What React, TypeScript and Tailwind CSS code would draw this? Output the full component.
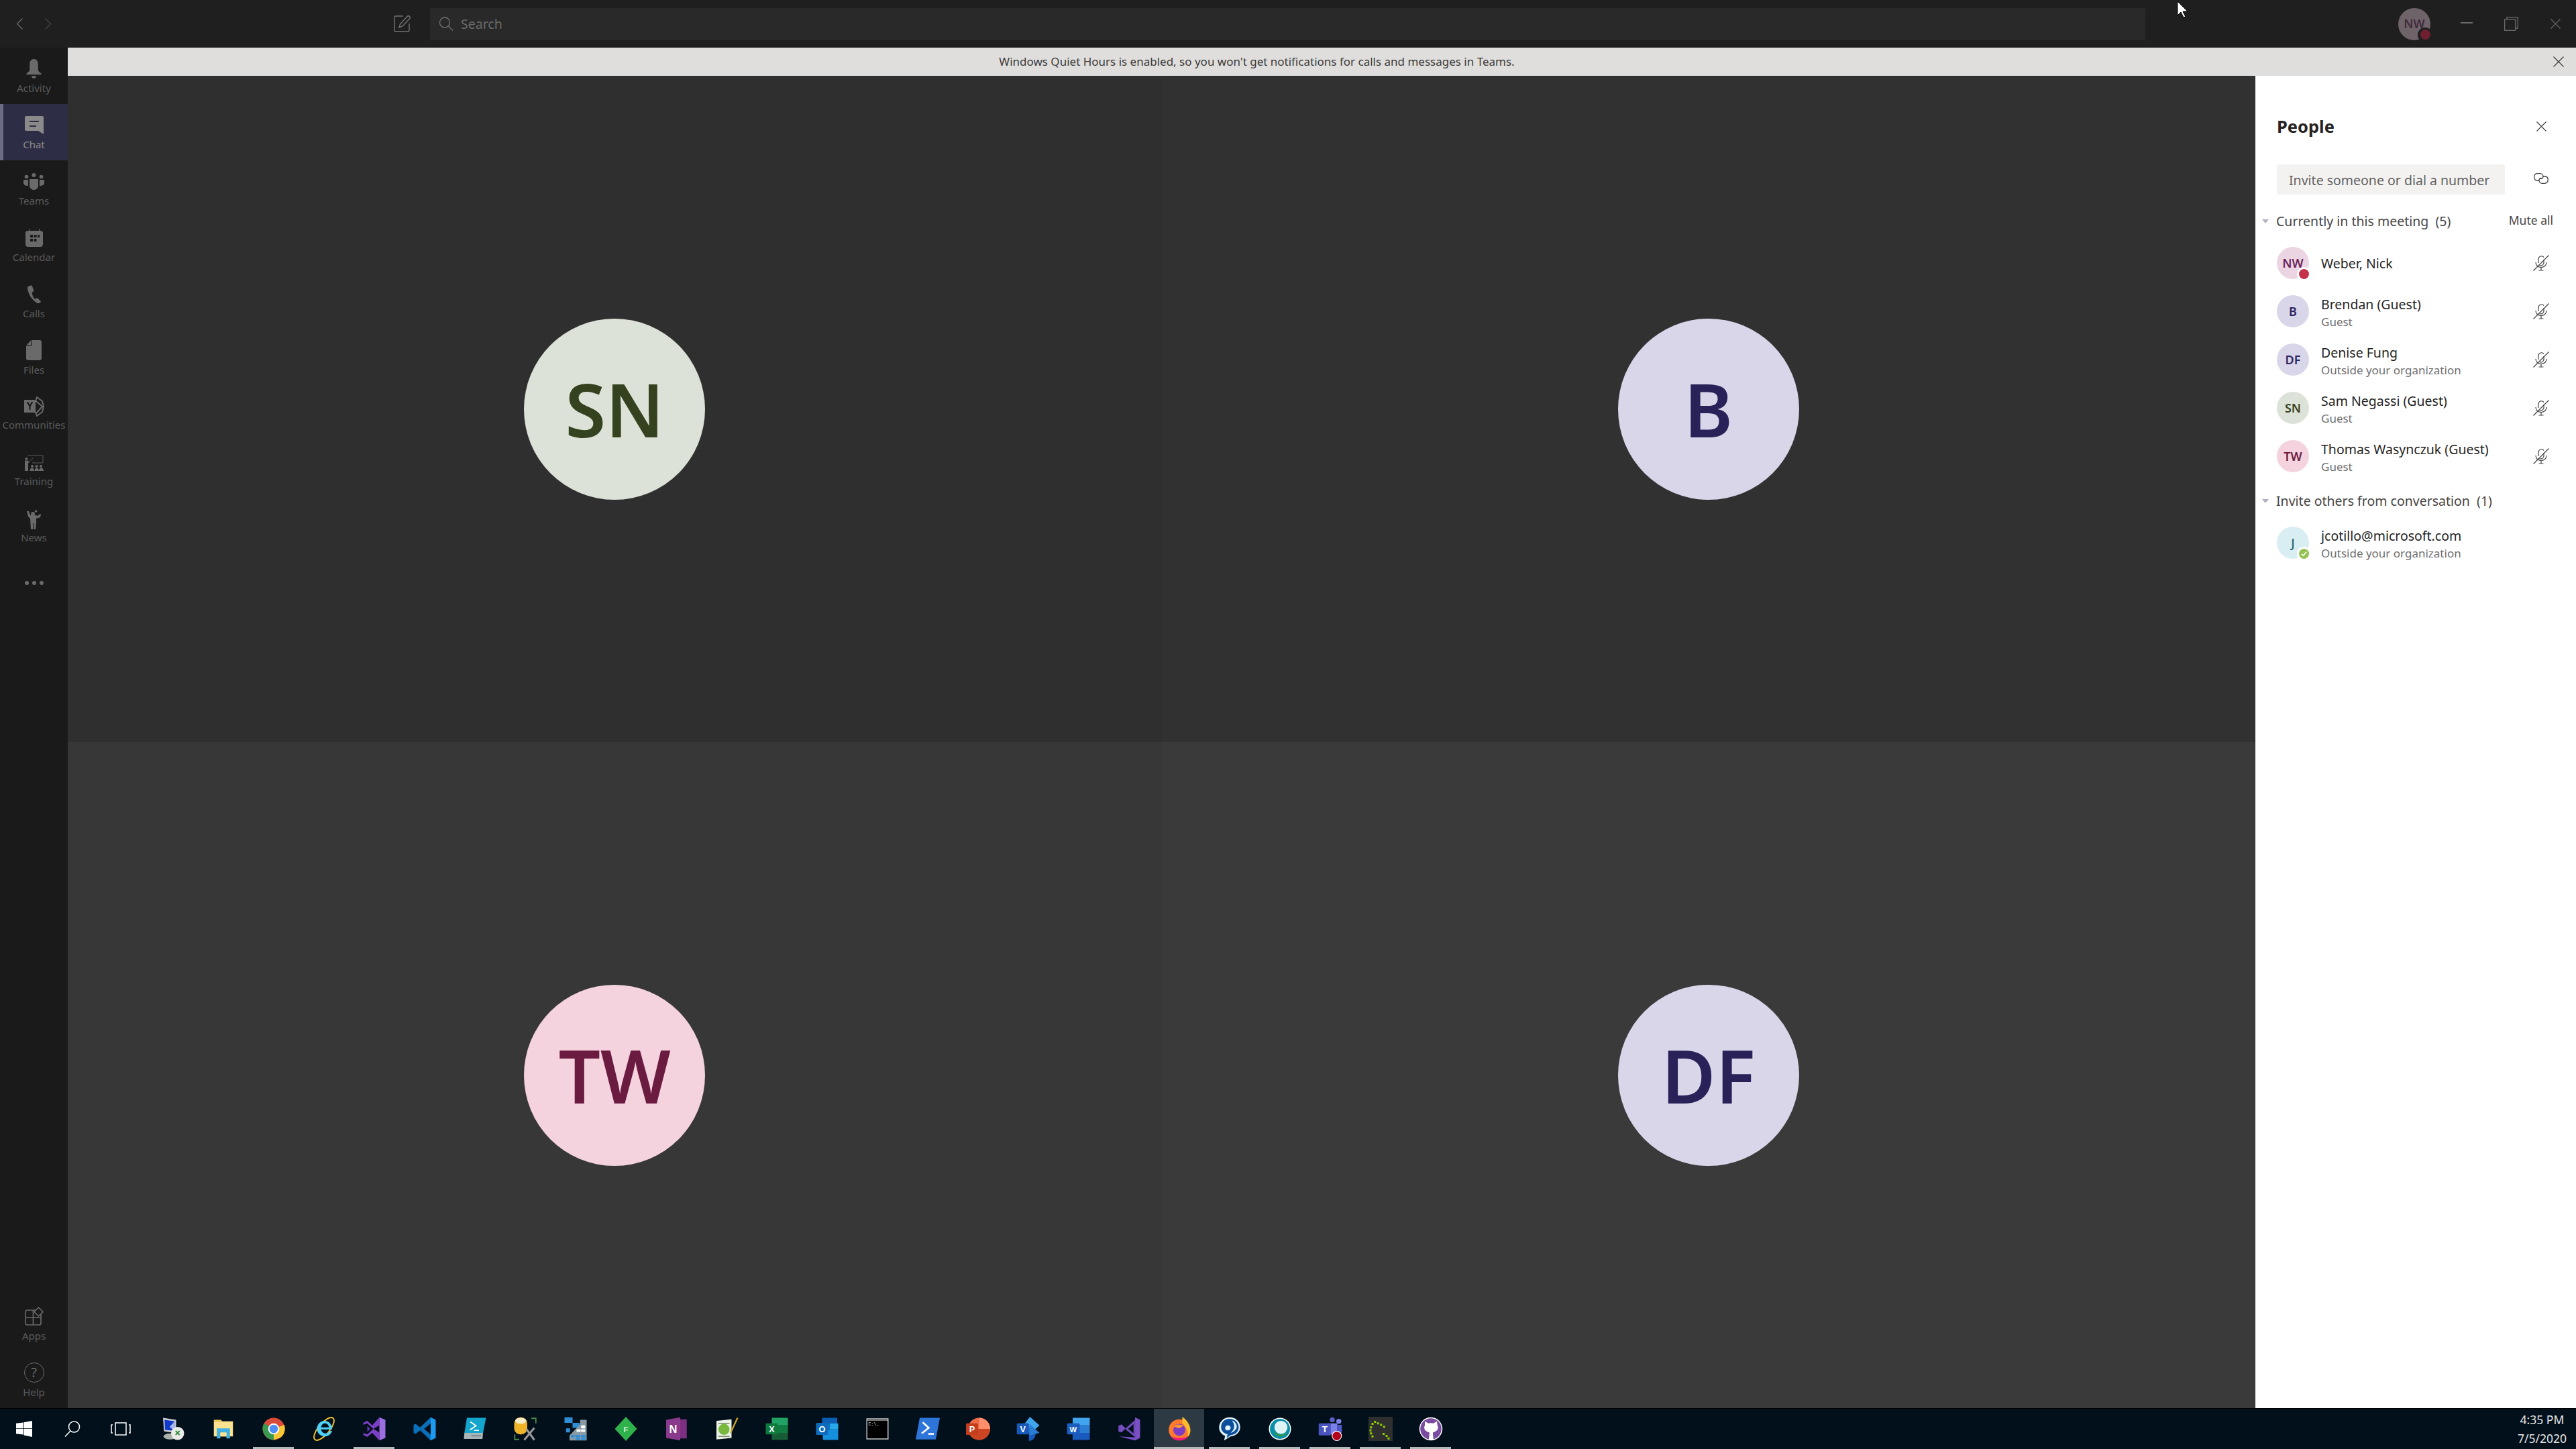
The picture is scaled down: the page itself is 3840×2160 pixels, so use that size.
import React from "react";

const Ico = ({ w = 28, h = 28, vb, children }: { w?: number; h?: number; vb: string; children: React.ReactNode }) => (
  <svg width={w} height={h} viewBox={vb} fill="none" className="shrink-0" preserveAspectRatio="none">{children}</svg>
);

const C = "currentColor";
const navIcons: Record<string, React.ReactNode> = {
  Activity: <Ico w={27} h={29} vb="0 0 30 30"><path fill={C} d="M15 0c-5 0-7 4-7 9v8c0 2-3 3.500-5 5-.8.800-.4 2 1 2h22c1.400 0 1.800-1.200 1-2-2-1.500-5-3-5-5V9c0-5-2-9-7-9z" /><path fill={C} d="M11 26h8c0 2-2 4-4 4s-4-2-4-4z" /></Ico>,
  Chat: <Ico w={28} h={27} vb="0 0 28 27"><path fill={C} fillRule="evenodd" d="M2 0h24c1.200 0 2 .800 2 2v25l-8-5H2c-1 0-2-.800-2-2V2C0 .800 1 0 2 0zm5 7v2h14V7zm0 7v2h10v-2z" /></Ico>,
  Teams: <Ico w={31} h={25} vb="0 0 31 25"><circle cx="15.500" cy="3" r="3" fill={C} /><circle cx="4.500" cy="5.500" r="2.800" fill={C} /><circle cx="26.500" cy="5.500" r="2.800" fill={C} /><path fill={C} d="M9 9h13v10c0 3.500-3 6-6.500 6S9 22.500 9 19z" /><path fill={C} d="M0 10h7v9c-4 0-7-1.500-7-4zM24 10h7v5c0 2.500-3 4-7 4z" /></Ico>,
  Calendar: <Ico w={26} h={27} vb="0 0 26 27"><path fill={C} fillRule="evenodd" d="M5 0h1v3h14V0h1v3h1c2.500 0 4 1 4 3v17c0 2.500-1.500 4-4 4H4c-2.500 0-4-1.500-4-4V6c0-2 1.500-3 4-3h1zm2 9v4h4V9zm5.500 0v4h4V9zM18 9v4h3V9zM7 15v4h4v-4zm5.500 0v4h4v-4z" /></Ico>,
  Calls: <Ico w={20} h={27} vb="0 0 20 27"><path fill={C} d="M1 2 5 .5c1-.3 1.600 0 2 1l2.200 6c.3 1 0 1.500-.6 2L6.500 11c.5 3.500 2 7 4 9.500l3-1c1-.3 1.500-.1 2.200.5l3.600 3.700c.8.800.6 1.500 0 2.200L17 27c-1 .5-2 .3-3-.3C6 21.500 1 13 0 5c0-1.500 0-2.500 1-3z" /></Ico>,
  Files: <Ico w={23} h={30} vb="0 0 23 30"><path fill={C} d="M8 0h12c2 0 3 1 3 3v24c0 2-1 3-3 3H3c-2 0-3-1-3-3V9h8z" /><path fill={C} d="M7 0.500V8H0z" /></Ico>,
  Communities: <Ico w={30} h={30} vb="0 0 30 30"><path fill={C} d="M1 5h16v19H1c-.500 0-1-.500-1-1V6c0-.500.500-1 1-1z" /><path stroke={C} strokeWidth="2" d="M17 7 19 1l8 6 2 8-2 8-8 6-2-5h2l8-9-8-7z" /><path fill="#1a1a1a" d="M3.500 8H6l2.500 4.500L11 8h2.500L9.500 15v5h-2v-5z" /></Ico>,
  Training: <Ico w={28} h={24} vb="0 0 28 24"><path stroke={C} strokeWidth=".8" d="M4 1h23v11H11" /><path stroke={C} strokeWidth=".8" d="M5 11 12 5" /><circle cx="2.500" cy="6" r="2" fill={C} /><path fill={C} d="M0 8.500h4.500l2 2.500-1.500 1.500V24H0z" /><circle cx="11" cy="17" r="2" fill={C} /><circle cx="17.500" cy="17" r="2" fill={C} /><circle cx="24" cy="17" r="2" fill={C} /><path fill={C} d="M7.500 24c0-6 6.500-6 6.500 0zM14.500 24c0-6 6.500-6 6.500 0zM21 24c0-6 7-6 7 0z" /></Ico>,
  News: <Ico w={21} h={30} vb="0 0 21 30"><circle cx="9" cy="7" r="3" fill={C} /><path fill={C} d="M0 3 3 3 5 9h8l3 1 4-3 1 1-1 4-6 2v6l-1 10h-3v-9H9v9H6l-1-16-3-3z" /><circle cx="13.500" cy="3" r="1.800" fill={C} /></Ico>,
  Apps: <Ico w={28} h={28} vb="0 0 28 28"><g stroke={C} strokeWidth="1.700"><rect x="1" y="5" width="23" height="22" rx="2.500" /><path d="M1 16h23M12.500 5v22" /><path fill="#1a1a1a" d="M20.500 1l6.500 6.500-6.500 6.500-6.500-6.500z" strokeLinejoin="round" /></g></Ico>,
};

const topItems: { n: string; active?: boolean; close?: boolean }[] = [
  { n: "Activity" }, { n: "Chat", active: true }, { n: "Teams" }, { n: "Calendar" }, { n: "Calls" },
  { n: "Files" }, { n: "Communities", close: true }, { n: "Training", close: true }, { n: "News", close: true },
];

function NavItem({ n, active, close }: { n: string; active?: boolean; close?: boolean }) {
  return (
    <div className={`h-[84px] flex flex-col items-center justify-start pt-[16px] relative ${active ? "bg-[#2d2d45] text-[#8a8a8a]" : "text-[#6a6a6a]"}`}>
      {active && <div className="absolute left-0 top-0 bottom-0 w-[5px] bg-[#6c6c84]" />}
      <div className="h-[30px] flex items-center justify-center">{navIcons[n]}</div>
      <div className={`${close ? "mt-[2px]" : "mt-[4px]"} text-[15px] leading-[20px] ${active ? "text-[#8c8c8c]" : "text-[#5a5a5a]"}`}>{n}</div>
    </div>
  );
}

const XIcon = ({ s, c, w = 1.5 }: { s: number; c: string; w?: number }) => (
  <svg width={s} height={s} viewBox="0 0 16 16" fill="none"><path d="M.5.5l15 15M15.500.5l-15 15" stroke={c} strokeWidth={w} /></svg>
);

const MicOff = () => (
  <svg width="24" height="24" viewBox="0 0 24 24" fill="none" stroke="#424242" strokeWidth="1.200">
    <path d="M8 12V6a4.500 4.500 0 0 1 8-2.500M16 7v5a4.500 4.500 0 0 1-6.500 3.500" />
    <path d="M4 11c0 4 3 7.500 8 7.500s8-3.500 8-7.500M12 18.500V23M8.500 23h7M.5 23.500 23.500.5" />
  </svg>
);

function Avatar({ t, bg, fg, status }: { t: string; bg: string; fg: string; status?: "busy" | "ok" }) {
  return (
    <div className={`relative w-[48px] h-[48px] rounded-full flex items-center justify-center shrink-0 text-[18px] font-semibold ${bg} ${fg}`}>
      {t}
      {status && (
        <div className="absolute right-[-3px] bottom-[-3px] w-[21px] h-[21px] rounded-full bg-white flex items-center justify-center">
          <div className={`w-[15px] h-[15px] rounded-full flex items-center justify-center ${status === "busy" ? "bg-[#c4314b]" : "bg-[#92c353]"}`}>
            {status === "ok" && <svg width="9" height="9" viewBox="0 0 10 10" fill="none"><path d="M1 5.500 4 8l5-6" stroke="#fff" strokeWidth="1.800" /></svg>}
          </div>
        </div>
      )}
    </div>
  );
}

function Row({ a, name, sub, mic = true }: { a: React.ReactNode; name: string; sub?: string; mic?: boolean }) {
  return (
    <div className="h-[72px] flex items-center pl-[31px] pr-[40px]">
      {a}
      <div className={`ml-[18px] flex-1 min-w-0 ${sub ? "pt-[5px]" : "pt-[2px]"}`}>
        <div className="text-[19.500px] leading-[26px] text-[#252423] whitespace-nowrap">{name}</div>
        {sub && <div className="text-[17px] leading-[26px] text-[#6f6f6f] whitespace-nowrap">{sub}</div>}
      </div>
      {mic && <MicOff />}
    </div>
  );
}

const Caret = () => <div className="w-0 h-0 border-l-[5.500px] border-r-[5.500px] border-t-[6px] border-l-transparent border-r-transparent border-t-[#b3b0c4]" />;

function SectionHead({ t, right, className = "" }: { t: string; right?: string; className?: string }) {
  return (
    <div className={`h-[40px] flex items-center pl-[9px] pr-[34px] ${className}`}>
      <Caret />
      <div className="ml-[11px] flex-1 text-[19.500px] text-[#484644] whitespace-pre">{t}</div>
      {right && <div className="text-[17.500px] text-[#484644] -mt-[4px]">{right}</div>}
    </div>
  );
}

function Tile({ t, bg, circle, fg }: { t: string; bg: string; circle: string; fg: string }) {
  return (
    <div className={`flex items-center justify-center ${bg}`}>
      <div className={`w-[270px] h-[270px] rounded-full flex items-center justify-center text-[110px] font-semibold ${circle} ${fg}`}>{t}</div>
    </div>
  );
}

const L = ({ x, y, c, t, s = 16 }: { x: number; y: number; c: string; t: string; s?: number }) => (
  <text x={x} y={y} fill={c} fontSize={s} fontWeight="700" textAnchor="middle" fontFamily="Liberation Sans, sans-serif">{t}</text>
);

const tb: { w?: React.ReactNode; u?: boolean; hl?: boolean; key: string }[] = [
  { key: "rdp", w: <g><path fill="#c9ccd3" d="M4 2 30 6v26L6 29z" /><path fill="#1339c9" d="M7 6l20 3v19L8 26z" /><path fill="#a7b8f0" d="M27 9v19l-10-8z" /><ellipse cx="18" cy="39" rx="13" ry="6" fill="#aab0aa" /><circle cx="33" cy="33" r="13" fill="#e9ece7" /><path d="M29 28l4 4-4 4M37 28l-4 4 4 4" stroke="#2f8a3e" strokeWidth="2.500" fill="none" /></g> },
  { key: "explorer", w: <g><path fill="#f1c84c" d="M5 6h14l3 3h-17z" /><path fill="#ffe28f" d="M5 9h38v30H5z" /><path fill="#3fb1e5" d="M11 23h26v20h-7V31H18v12h-7z" /><path fill="#ffe28f" d="M18 32h12v7H18z" /></g> },
  { key: "chrome", u: true, w: <g><circle cx="24" cy="24" r="22" fill="#d94a3a" /><path fill="#f7c833" d="M24 24 45 16c3 9 1 20-9 26l-12 4z" /><path fill="#399a4d" d="M24 24 24 46C12 46 2 35 2 24c0-4 1-8 3-11z" /><circle cx="24" cy="24" r="11" fill="#fff" /><circle cx="24" cy="24" r="8.500" fill="#4e8df1" /></g> },
  { key: "ie", w: <g><ellipse cx="24" cy="24" rx="28" ry="11" fill="none" stroke="#f4c22e" strokeWidth="2.500" transform="rotate(-50 24 24)" /><path fill="#4fd0f5" d="M25 8c9 0 15 7 15 17H18c1 5 5 8 9 8s7-2 9-5h4c-2 7-8 11-14 11-9 0-16-7-16-15S16 8 25 8zm-7 13h16c-1-5-4-8-8-8s-7 3-8 8z" /></g> },
  { key: "vs", u: true, w: <g><path fill="#9c6fe0" d="M34 1l12 5v36l-12 5z" /><path fill="#7a3fc4" d="M34 1v16l-12 7L10 13l-8 3v16l8 3 12-11 12 7v16L20 32l-10 8-8-4V12l8-4 10 9z" /><path fill="#6530a8" d="M10 18v12l6-6z" /></g> },
  { key: "vscode", w: <g><path fill="#0a6fb8" d="M36 1 15 21 6 14l-4 2v16l4 2 9-7 21 20z" /><path fill="#1d9bf0" d="M36 1l10 5v36l-10 5z" /><path fill="#000d18" d="M36 13v22L23 24z" /></g> },
  { key: "psa", w: <g><path fill="#14a5cc" d="M8 2h38l-6 30H3z" /><path fill="#a9b6b9" d="M3 32h37l-1 12H2z" /><path d="M15 10l11 8-12 8" stroke="#fff" strokeWidth="2.500" fill="none" /><path d="M22 27h10" stroke="#fff" strokeWidth="2" /><path d="M17 38h19" stroke="#4b5b60" strokeWidth="1.500" /></g> },
  { key: "db", w: <g><rect x="2" y="1" width="26" height="34" rx="12" fill="#f0b429" /><ellipse cx="15" cy="8" rx="11" ry="6" fill="#f6ecc8" /><path d="M36 3h9v10M3 35v10h9" stroke="#4a8a4a" strokeWidth="2.500" fill="none" /><path d="M22 46 42 22M42 46 26 24" stroke="#9a9a9a" strokeWidth="4" /></g> },
  { key: "sql", w: <g fill="#2f8dd6"><rect x="2" y="1" width="16" height="11" /><rect x="18" y="12" width="14" height="10" /><rect x="5" y="23" width="8" height="8" /><path fill="#8a9aa5" d="M12 47V37l21-22V6h13v41z" /><path fill="#fff" d="M35 17h8v6h-8zM26 25h8v5h-8zM35 25h8v5h-8z" /><rect x="15" y="36" width="7" height="5" /><rect x="24" y="36" width="9" height="5" /><rect x="35" y="36" width="9" height="5" /><rect x="24" y="42" width="9" height="4" /><rect x="35" y="42" width="9" height="4" /></g> },
  { key: "f", w: <g><path fill="#2fb14b" d="M24 0 46 24 24 48 2 24z" /><L x={24} y={30} c="#d8f5dd" t="F" s={15} /></g> },
  { key: "onenote", w: <g><path fill="#8a3a8c" d="M4 6 32 1v46L4 42z" /><path fill="#7d2f80" d="M32 5h13v38H32z" /><L x={18} y={32} c="#fff" t="N" s={22} /></g> },
  { key: "npp", w: <g><path fill="#e9f2e4" d="M4 8 34 5v37L4 45z" /><circle cx="19" cy="25" r="11" fill="#78b83c" /><path d="M8 13h22M8 39h22" stroke="#7a8a70" strokeWidth="2" /><path d="M32 32 46 2" stroke="#d4a72c" strokeWidth="3" /></g> },
  { key: "excel", w: <g><path fill="#21a366" d="M14 2h32v15H14z" /><path fill="#107c41" d="M14 17h32v15H14z" /><path fill="#185c37" d="M14 32h32v14H14z" /><rect x="2" y="13" width="24" height="22" rx="2" fill="#0f7a3d" /><L x={14} y={30} c="#fff" t="X" s={17} /></g> },
  { key: "outlook", w: <g><path fill="#0a5fb4" d="M14 2h30v11H14z" /><path fill="#28a8ea" d="M29 13h17v12H29z" /><path fill="#0f78d4" d="M14 13h15v12H14z" /><path fill="#1490df" d="M14 25 46 25v21H16z" /><rect x="2" y="12" width="24" height="24" rx="2" fill="#0f6cbd" /><L x={14} y={30} c="#fff" t="O" s={17} /></g> },
  { key: "cmd", w: <g><rect x="2" y="3" width="44" height="42" fill="#c8c8c8" /><rect x="4" y="8" width="40" height="35" fill="#000" /><rect x="4" y="4" width="40" height="4" fill="#767676" /><text x="6" y="17" fill="#ddd" fontSize="9" fontFamily="Liberation Mono, monospace">C:\_</text></g> },
  { key: "ps", w: <g><path fill="#2e75d9" d="M8 2h40l-8 43H0z" /><path d="M14 11l12 11-14 11" stroke="#fff" strokeWidth="3.500" fill="none" /><path d="M25 34h11" stroke="#fff" strokeWidth="3.500" /></g> },
  { key: "ppt", w: <g><circle cx="26" cy="24" r="22" fill="#ed6c47" /><path fill="#ff8f6b" d="M26 2a22 22 0 0 1 22 22H26z" /><path fill="#c43e1c" d="M4 24h44c0 12-10 22-22 22S4 36 4 24z" opacity=".85" /><rect x="0" y="13" width="24" height="23" rx="2" fill="#c43e1c" /><L x={12} y={31} c="#fff" t="P" s={17} /></g> },
  { key: "visio", w: <g><path fill="#41a5ee" d="M27 0l19 17-19 17-13-17z" /><path fill="#185abd" d="M25 22a13 13 0 1 1 0 26z" /><path fill="#2b7cd3" d="M26 14 46 32 26 37z" /><rect x="1" y="13" width="24" height="22" rx="2" fill="#1859b8" /><L x={13} y={30} c="#fff" t="V" s={17} /></g> },
  { key: "word", w: <g><path fill="#41a5ee" d="M12 2h34v15H12z" /><path fill="#2b7cd3" d="M12 17h34v15H12z" /><path fill="#185abd" d="M12 32h34v14H12z" /><rect x="1" y="13" width="25" height="22" rx="2" fill="#1a5fc0" /><L x={13} y={30} c="#fff" t="W" s={15} /></g> },
  { key: "vs2", w: <g><path fill="#7a4fc4" d="M36 1 46 6v36l-10 5-32-8 32 2zM9 15l8 8-8 8-6-2V18z" /><path stroke="#6f4ab8" strokeWidth="4" fill="none" d="M35 10 19 24l16 13zM6 17v13" /></g> },
  { key: "firefox", u: true, hl: true, w: <g><circle cx="24" cy="26" r="21" fill="#ff7a2a" /><path fill="#ffbd2e" d="M30 0c8 6 16 15 16 27 0 5-2 10-5 13 1-10-3-20-11-27z" /><path fill="#f0187f" d="M6 38c8 12 28 12 36 1-10 4-26 5-36-1z" /><circle cx="24" cy="26" r="12" fill="#7d3cc4" /><path fill="#ff9a2a" d="M14 20c4-6 12-6 18-2l-8 5z" /></g> },
  { key: "skype", u: true, w: <g><path fill="#dff1fb" d="M24 1C12 1 3 10 3 21c0 8 5 14 12 17l-2 9 13-8c11-1 19-9 19-18C45 9 36 1 24 1z" /><path fill="#0b4f9c" d="M24 4c10 0 18 7 18 17 0 8-7 15-15 15l-9 6 2-7c-8-2-13-8-13-14C7 11 14 4 24 4z" /><path fill="#dff1fb" d="M28 7c7 2 11 9 10 14s-7 10-12 11c5-5 7-8 7-13s-2-9-5-12zM20 17c4 0 6 2 6 5s-2 5-6 5-5-3-5-5 2-5 5-5z" /></g> },
  { key: "circle", u: true, w: <g><circle cx="24" cy="24" r="22" fill="#fff" /><circle cx="24" cy="24" r="20" fill="#0b8fa8" /><circle cx="26" cy="21" r="13" fill="#dff3f5" /><path fill="#3b9a3a" d="M10 26c4 10 20 14 28 4-4 12-24 13-28-4z" /></g> },
  { key: "teams", u: true, w: <g><circle cx="28" cy="6" r="5" fill="#5b5fc7" /><circle cx="41" cy="9" r="5" fill="#7b83eb" /><path fill="#7b83eb" d="M18 13h20v22H22z" /><path fill="#5059c9" d="M38 16h9v12c0 6-4 9-9 9z" /><rect x="1" y="13" width="24" height="24" rx="2" fill="#4b53bc" /><L x={13} y={31} c="#fff" t="T" s={18} /><circle cx="37" cy="38" r="10" fill="#fff" /><circle cx="37" cy="38" r="8.500" fill="#b3001b" /></g> },
  { key: "term", u: true, w: <g><rect x="0" y="0" width="48" height="48" fill="#2f2f2f" /><g fill="#8ed100"><rect x="6" y="12" width="4" height="4" /><rect x="11" y="8" width="4" height="4" /><rect x="17" y="11" width="4" height="4" /><rect x="23" y="14" width="4" height="4" /><rect x="29" y="18" width="4" height="4" /><rect x="3" y="19" width="4" height="4" /><rect x="2" y="25" width="4" height="4" /><rect x="3" y="31" width="4" height="4" /><rect x="6" y="37" width="4" height="4" /><rect x="28" y="32" width="4" height="4" /><rect x="34" y="36" width="4" height="4" /><rect x="38" y="41" width="4" height="4" /></g></g> },
  { key: "github", u: true, w: <g><circle cx="24" cy="24" r="23" fill="#ffffff" /><circle cx="24" cy="24" r="21" fill="#7a4ba0" /><path fill="#fff" d="M12 9l7 4c3-1 7-1 10 0l7-4 1 8c3 6 0 12-9 14v3c0 3 1 7 1 12H20c0-5 1-9 1-12v-3c-9-2-12-8-9-14z" /></g> },
];

export default function App() {
  return (
    <div className="w-[3840px] h-[2160px] flex flex-col relative overflow-hidden bg-[#1f1f1f] font-['Noto_Sans','Open_Sans',sans-serif]">
      <div className="h-[71px] shrink-0 flex items-center bg-[#1f1f1f]">
        <div className="w-[101px] flex items-center pl-[24px] gap-[33px] shrink-0">
          <svg width="10" height="17" viewBox="0 0 10 17" fill="none"><path d="M9.500.5 1.500 8.500l8 8" stroke="#6b6b6b" strokeWidth="1.300" /></svg>
          <svg width="10" height="17" viewBox="0 0 10 17" fill="none"><path d="M.5.5l8 8-8 8" stroke="#444" strokeWidth="1.300" /></svg>
        </div>
        <div className="ml-[486px] w-[26px] flex justify-center shrink-0">
          <svg width="26" height="25" viewBox="0 0 26 25" fill="none" stroke="#737373" strokeWidth="1.400">
            <path d="M14 1H3C1.500 1 1 2 1 3v19c0 1.500.500 2 2 2h18c1.500 0 2-.500 2-2V12" />
            <path d="M8 18l1.500-5L20 1.500c1-1 2.500-1 3.500 0s1 2.500 0 3.500L13 16z" />
          </svg>
        </div>
        <div className="ml-[28px] w-[2557px] h-[48px] rounded-[3px] bg-[#292929] flex items-center pl-[13px] shrink-0">
          <svg width="22" height="21" viewBox="0 0 22 21" fill="none" stroke="#737373" strokeWidth="1.300"><circle cx="9" cy="8.500" r="7.500" /><path d="M14.500 14l6.500 6.500" /></svg>
          <span className="ml-[11px] text-[19.500px] text-[#6a6a6a]">Search</span>
        </div>
        <div className="ml-[377px] relative w-[48px] h-[48px] rounded-full bg-[#6f636a] flex items-center justify-center text-[18px] font-semibold text-[#3f2a3a] shrink-0">
          NW
          <div className="absolute right-[-3px] bottom-[-3px] w-[22px] h-[22px] rounded-full bg-[#1f1f1f] flex items-center justify-center">
            <div className="w-[15px] h-[15px] rounded-full bg-[#6f2030]" />
          </div>
        </div>
        <div className="ml-[45px] w-[18px] h-[2px] -mt-[3px] bg-[#6b6b6b]" />
        <svg className="ml-[47px]" width="21" height="21" viewBox="0 0 21 21" fill="none" stroke="#6b6b6b" strokeWidth="1.300"><rect x=".7" y="4" width="16" height="16.300" /><path d="M4 4V.7h16.300V17H17" /></svg>
        <div className="ml-[48px]"><XIcon s={15} c="#6b6b6b" w={1.300} /></div>
      </div>

      <div className="flex-1 flex min-h-0">
        <div className="w-[101px] shrink-0 bg-[#1a1a1a] flex flex-col">
          {topItems.map((i) => <NavItem key={i.n} n={i.n} active={i.active} close={i.close} />)}
          <div className="h-[84px] flex items-start justify-center gap-[5px] pt-[39px]">
            <div className="w-[6px] h-[6px] rounded-full bg-[#6a6a6a]" />
            <div className="w-[6px] h-[6px] rounded-full bg-[#6a6a6a]" />
            <div className="w-[6px] h-[6px] rounded-full bg-[#6a6a6a]" />
          </div>
          <div className="mt-auto">
            <NavItem n="Apps" />
            <div className="h-[84px] flex flex-col items-center pt-[16px] text-[#6a6a6a]">
              <div className="w-[30px] h-[30px] rounded-full border-[1.500px] border-[#6a6a6a] flex items-center justify-center text-[20px] leading-none">?</div>
              <div className="mt-[4px] text-[15px] leading-[20px] text-[#5a5a5a]">Help</div>
            </div>
          </div>
        </div>

        <div className="flex-1 flex flex-col min-w-0">
          <div className="h-[42px] shrink-0 bg-[#dfdedc] flex items-center">
            <div className="flex-1 pr-[160px] text-center text-[17px] text-[#3b3a39]">Windows Quiet Hours is enabled, so you won't get notifications for calls and messages in Teams.</div>
            <div className="mr-[18px]"><XIcon s={16} c="#424242" w={1.300} /></div>
          </div>
          <div className="flex-1 flex min-h-0">
            <div className="w-[3261px] grid grid-cols-2 grid-rows-[993px_1fr] shrink-0">
              <Tile t="SN" bg="bg-[#2f2f2f]" circle="bg-[#dde2d8]" fg="text-[#35421f]" />
              <Tile t="B" bg="bg-[#313131]" circle="bg-[#d9d6ea]" fg="text-[#282258]" />
              <Tile t="TW" bg="bg-[#373737]" circle="bg-[#f4d3df]" fg="text-[#6a1b3f]" />
              <Tile t="DF" bg="bg-[#3a3a3a]" circle="bg-[#d9d6ea]" fg="text-[#282258]" />
            </div>
            <div className="flex-1 bg-white border-l border-[#f0f0f0] flex flex-col">
              <div className="mt-[57px] h-[40px] shrink-0 flex items-center justify-between pl-[31px] pr-[44px]">
                <div className="text-[25.500px] font-bold text-[#252423] leading-none -mt-[2px]">People</div>
                <div className="-mt-[4px]"><XIcon s={15} c="#424242" w={1.300} /></div>
              </div>
              <div className="mt-[35px] h-[45px] shrink-0 flex items-center pl-[31px] pr-[40px]">
                <div className="w-[340px] h-[45px] pt-[2px] rounded-[4px] bg-[#f3f2f1] flex items-center pl-[18px] text-[19.500px] text-[#616161] whitespace-nowrap">Invite someone or dial a number</div>
                <svg className="ml-[43px] -mt-[4px]" width="22" height="16" viewBox="0 0 22 16" fill="none" stroke="#424242" strokeWidth="1.300">
                  <path d="M8 11H5.500C2.500 11 .7 9 .7 6S2.500.7 5.500.7h4C12.500.7 14 3 14 5c0 2-1.500 3.500-3.500 3.500" />
                  <path d="M14 5h2.500c3 0 4.800 2 4.800 5s-1.800 5.300-4.800 5.300h-4C9.500 15.300 8 13 8 11c0-2 1.500-3.500 3.500-3.500" />
                </svg>
              </div>
              <SectionHead className="mt-[20px] mb-[6px] shrink-0" t="Currently in this meeting  (5)" right="Mute all" />
              <Row a={<Avatar t="NW" bg="bg-[#ecd5e3]" fg="text-[#6b2456]" status="busy" />} name="Weber, Nick" />
              <Row a={<Avatar t="B" bg="bg-[#d9d6ea]" fg="text-[#2b2563]" />} name="Brendan (Guest)" sub="Guest" />
              <Row a={<Avatar t="DF" bg="bg-[#d9d6ea]" fg="text-[#2b2563]" />} name="Denise Fung" sub="Outside your organization" />
              <Row a={<Avatar t="SN" bg="bg-[#dde2d8]" fg="text-[#35421f]" />} name="Sam Negassi (Guest)" sub="Guest" />
              <Row a={<Avatar t="TW" bg="bg-[#f4d3df]" fg="text-[#6a1b3f]" />} name="Thomas Wasynczuk (Guest)" sub="Guest" />
              <SectionHead className="mt-[11px] mb-[6px] shrink-0" t="Invite others from conversation  (1)" />
              <Row a={<Avatar t="J" bg="bg-[#d9eef2]" fg="text-[#2e6f75]" status="ok" />} name="jcotillo@microsoft.com" sub="Outside your organization" mic={false} />
            </div>
          </div>
        </div>
      </div>

      <div className="h-[61px] shrink-0 bg-[#02101b] border-t border-black flex items-stretch">
        <div className="w-[72px] flex items-center justify-center">
          <svg width="24" height="24" viewBox="0 0 26 28" fill="#fff" preserveAspectRatio="none"><path d="M0 4.500 11.500 3v10H0zM12.500 2.500 26 0v13H12.500zM0 14h11.500v10L0 22.500zM12.500 14H26v14L12.500 25z" /></svg>
        </div>
        <div className="w-[72px] flex items-center justify-center">
          <svg width="24" height="24" viewBox="0 0 24 24" fill="none" stroke="#fff" strokeWidth="1.500"><circle cx="14.500" cy="9" r="8" /><path d="M9 15 1 23.500" /></svg>
        </div>
        <div className="w-[72px] mr-[4px] flex items-center justify-center">
          <svg width="30" height="20" viewBox="0 0 30 20" fill="none" stroke="#fff" strokeWidth="1.500"><rect x="7" y="1" width="16" height="18" /><path d="M3 4H1v12h2M27 4h2v12h-2" /></svg>
        </div>
        {tb.map((t) => (
          <div key={t.key} className={`w-[75px] relative flex items-center justify-center ${t.hl ? "bg-[#2d3a44]" : ""}`}>
            <svg width="36" height="36" viewBox="0 0 48 48">{t.w}</svg>
            {t.u && <div className={`absolute bottom-0 h-[3px] bg-[#b5b8ba] ${t.hl ? "left-0 right-0" : "left-[7px] right-[7px]"}`} />}
          </div>
        ))}
        <div className="ml-auto pr-[14px] flex flex-col items-center justify-center text-[17.500px] leading-[28px] text-[#e6e6e6]">
          <div>4:35 PM</div>
          <div>7/5/2020</div>
        </div>
      </div>

      <svg className="absolute left-[3245px] top-[1px]" width="18" height="26" viewBox="0 0 18 26">
        <path d="M1 1v21l5-5 4 8 3-1-4-8h7z" fill="#fff" stroke="#000" strokeWidth="1" />
      </svg>
    </div>
  );
}
